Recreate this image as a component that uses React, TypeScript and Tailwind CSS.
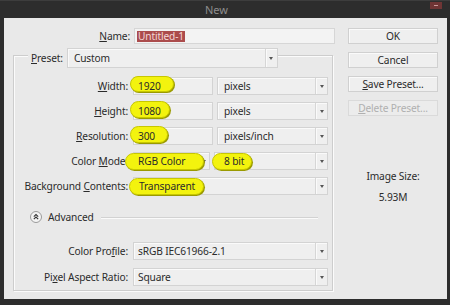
import React from "react";

const Arrow = () => (
  <svg width="4" height="3" viewBox="0 0 4 3" className="block">
    <path d="M0 0 L4 0 L2 3 Z" fill="#555" />
  </svg>
);

function Select({
  w,
  text,
  pl = "pl-[6px]",
  h = "h-[18px]",
  children,
}: {
  w: string;
  text?: string;
  pl?: string;
  h?: string;
  children?: React.ReactNode;
}) {
  return (
    <div className={`relative flex ${w} ${h} bg-[#efefef] border border-[#d3d3d3] shadow-[inset_1px_1px_0_#fafafa]`}>
      {children}
      <div className={`relative flex-1 flex items-center ${pl} whitespace-nowrap`}>{text}</div>
      <div className="w-[12px] flex items-center justify-center border-l border-[#d6d6d6] shadow-[inset_1px_0_0_#fafafa]">
        <Arrow />
      </div>
    </div>
  );
}

function Input({ w, text, children }: { w: string; text: string; children?: React.ReactNode }) {
  return (
    <div className={`relative flex items-center ${w} h-[18px] bg-[#efefef] border border-[#d3d3d3] shadow-[inset_1px_1px_0_#fafafa]`}>
      {children}
      <span className="relative pl-[4px]">{text}</span>
    </div>
  );
}

function Pill({ cls }: { cls: string }) {
  return (
    <div
      className={`absolute ${cls} rounded-full bg-[#f3f30e] border border-[#c7c700] shadow-[1px_1px_0_#9a9a00]`}
    />
  );
}

function Label({ children, w = "w-[115px]" }: { children: React.ReactNode; w?: string }) {
  return <div className={`${w} text-right pr-[1px] whitespace-nowrap`}>{children}</div>;
}

const U = ({ children }: { children: React.ReactNode }) => (
  <span className="underline underline-offset-[1px]">{children}</span>
);

export default function App() {
  return (
    <div className="w-[450px] h-[305px] bg-[#2d2d2d] flex flex-col font-['Noto_Sans',sans-serif] text-[10.2px] tracking-[-0.15px] leading-none text-[#2b2b2b]">
      {/* title bar */}
      <div className="relative h-[18px] flex items-center border-t border-[#3d3d3d]">
        <span className="ml-[205px] text-[11px] tracking-normal text-[#8e8e8e]">New</span>
        <div className="absolute right-[8px] top-[1px] w-[12px] h-[7px] bg-[#6f3535] flex items-center justify-center">
          <div className="w-[4px] h-[1px] bg-[#c99a9a]" />
        </div>
      </div>

      {/* content */}
      <div className="flex-1 ml-[4px] mr-[3px] mb-[6px] bg-[#e9e9e9] flex">
        {/* left */}
        <div className="w-[336px] pt-[10px] flex flex-col">
          {/* name */}
          <div className="flex items-center h-[16px]">
            <div className="w-[126px] text-right">
              <U>N</U>ame:
            </div>
            <div className="ml-[4px] w-[201px] h-[16px] bg-[#f3f3f3] border border-[#d6d6d6] flex items-center pl-[2px]">
              <span className="bg-[#ab4c4c] text-[#f3d7d7] h-[11px] px-[1px] flex items-center">Untitled-1</span>
            </div>
          </div>

          {/* group box */}
          <div className="mt-[11px] ml-[9px] w-[320px] border border-[#cdcdcd] shadow-[inset_1px_1px_0_#fbfbfb,1px_1px_0_#fbfbfb] flex flex-col pb-[4px]">
            {/* legend row */}
            <div className="-mt-[8px] ml-[14px] self-start flex items-center bg-[#e9e9e9] pl-[3px]">
              <span className="whitespace-nowrap">
                <U>P</U>reset:
              </span>
              <div className="ml-[4px]">
                <Select w="w-[211px]" h="h-[20px]" text="Custom" />
              </div>
            </div>

            {/* width */}
            <div className="mt-[9px] flex items-center">
              <Label>
                <U>W</U>idth:
              </Label>
              <div className="ml-[4px] flex gap-[4px]">
                <Input w="w-[80px]" text="1920">
                  <Pill cls="-left-[4px] -top-[2px] w-[44px] h-[16px]" />
                </Input>
                <Select w="w-[111px]" text="pixels" />
              </div>
            </div>

            {/* height */}
            <div className="mt-[7px] flex items-center">
              <Label>
                <U>H</U>eight:
              </Label>
              <div className="ml-[4px] flex gap-[4px]">
                <Input w="w-[80px]" text="1080">
                  <Pill cls="-left-[4px] -top-[2px] w-[40px] h-[17px]" />
                </Input>
                <Select w="w-[111px]" text="pixels" />
              </div>
            </div>

            {/* resolution */}
            <div className="mt-[7px] flex items-center">
              <Label>
                <U>R</U>esolution:
              </Label>
              <div className="ml-[4px] flex gap-[4px]">
                <Input w="w-[80px]" text="300">
                  <Pill cls="-left-[4px] -top-[2px] w-[38px] h-[17px]" />
                </Input>
                <Select w="w-[111px]" text="pixels/inch" />
              </div>
            </div>

            {/* color mode */}
            <div className="mt-[7px] flex items-center">
              <Label>
                Color <U>M</U>ode:
              </Label>
              <div className="ml-[4px] flex gap-[4px]">
                <Select w="w-[77px]" text="RGB Color" pl="pl-[4px]">
                  <Pill cls="-left-[9px] top-[0px] w-[79px] h-[17px]" />
                </Select>
                <Select w="w-[114px]" text="8 bit" pl="pl-[9px]">
                  <Pill cls="-left-[3px] top-[0px] w-[40px] h-[17px]" />
                </Select>
              </div>
            </div>

            {/* bg contents */}
            <div className="mt-[7px] flex items-center">
              <Label>
                Background <U>C</U>ontents:
              </Label>
              <div className="ml-[4px] flex">
                <Select w="w-[195px]" text="Transparent" pl="pl-[5px]">
                  <Pill cls="-left-[5px] top-[0px] w-[75px] h-[17px]" />
                </Select>
              </div>
            </div>

            {/* advanced */}
            <div className="mt-[15px] h-[14px] flex items-center">
              <div className="ml-[16px] w-[12px] h-[12px]">
                <svg width="12" height="12" viewBox="0 0 12 12" className="block">
                  <circle cx="6" cy="6" r="5.5" fill="#f4f4f4" stroke="#9a9a9a" />
                  <path d="M3.8 5.6 L6 3.6 L8.2 5.6 M3.8 8.1 L6 6.1 L8.2 8.1" fill="none" stroke="#333" strokeWidth="1.1" />
                </svg>
              </div>
              <span className="ml-[6px]">Advanced</span>
              <div className="flex-1 ml-[7px] mr-[14px] h-[1px] bg-[#d2d2d2] shadow-[0_1px_0_#fafafa]" />
            </div>

            {/* color profile */}
            <div className="mt-[18px] flex items-center">
              <Label>
                Color Pro<U>f</U>ile:
              </Label>
              <div className="ml-[4px] flex">
                <Select w="w-[195px]" text="sRGB IEC61966-2.1" pl="pl-[4px]" />
              </div>
            </div>

            {/* pixel aspect */}
            <div className="mt-[8px] flex items-center">
              <Label>
                Pi<U>x</U>el Aspect Ratio:
              </Label>
              <div className="ml-[4px] flex">
                <Select w="w-[195px]" text="Square" pl="pl-[4px]" />
              </div>
            </div>
          </div>
        </div>

        {/* right */}
        <div className="ml-[8px] w-[90px] pt-[10px] flex flex-col">
          <div className="flex flex-col gap-[8px]">
            <div className="h-[16px] flex items-center justify-center bg-[#efefef] border border-[#d0d0d0] shadow-[inset_1px_1px_0_#fafafa]">OK</div>
            <div className="h-[16px] flex items-center justify-center bg-[#efefef] border border-[#d0d0d0] shadow-[inset_1px_1px_0_#fafafa]">Cancel</div>
            <div className="h-[16px] flex items-center justify-center bg-[#efefef] border border-[#d0d0d0] shadow-[inset_1px_1px_0_#fafafa]">
              <span>
                <U>S</U>ave Preset...
              </span>
            </div>
            <div className="h-[16px] flex items-center justify-center bg-[#ececec] border border-[#dadada] text-[#b0b0b0]">
              <span>
                <U>D</U>elete Preset...
              </span>
            </div>
          </div>
          <div className="mt-[53px] h-[14px] flex items-center justify-center">Image Size:</div>
          <div className="mt-[7px] h-[14px] flex items-center justify-center">5.93M</div>
        </div>
      </div>
    </div>
  );
}
